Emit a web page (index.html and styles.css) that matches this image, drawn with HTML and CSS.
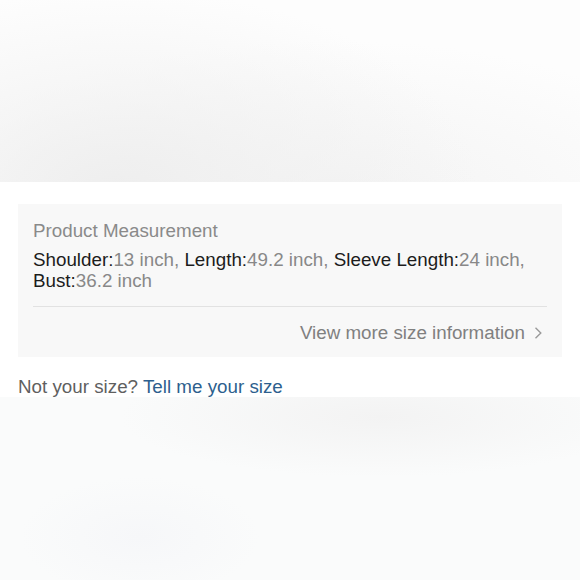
FILE: index.html
```html
<!DOCTYPE html>
<html>
<head>
<meta charset="utf-8">
<link rel="stylesheet" href="styles.css">
</head>
<body>
<div class="hero"></div>
<section class="size">
  <div class="card">
    <div class="title">Product Measurement</div>
    <p class="specs"><span class="k">Shoulder:</span><span class="v">13 inch, </span><span class="k">Length:</span><span class="v">49.2 inch, </span><span class="k">Sleeve Length:</span><span class="v">24 inch, </span><span class="k">Bust:</span><span class="v">36.2 inch</span></p>
    <div class="more">View more size information <svg class="chev" width="9" height="14" viewBox="0 0 9 14"><path d="M1.5 1.8 L6.8 7 L1.5 12.2" fill="none" stroke="#9a9a9a" stroke-width="1.4"/></svg></div>
  </div>
  <div class="notsize">Not your size? <a class="link">Tell me your size</a></div>
</section>
<div class="below"></div>
</body>
</html>
```
FILE: styles.css
```css
html, body { margin: 0; padding: 0; background: #fff; }
body { font-family: "Liberation Sans", Arial, sans-serif; width: 580px; }
.hero {
  height: 182px;
  background:
    radial-gradient(ellipse 360px 200px at 120px 190px, #eeeeee 0%, rgba(240,240,240,0.6) 45%, rgba(253,253,253,0) 100%),
    radial-gradient(ellipse 400px 160px at 330px 200px, #f3f3f3 0%, rgba(253,253,253,0) 100%),
    #fdfdfd;
}
.size { padding: 22px 18px 0; }
.card {
  background: #f8f8f8;
  padding: 16px 15px 0;
  box-sizing: border-box;
  height: 153px;
}
.title { font-size: 18.8px; color: #8a8a8a; line-height: 22px; }
.specs {
  margin: 7px 0 0;
  font-size: 18.8px;
  line-height: 21px;
  padding-bottom: 15px;
  border-bottom: 1px solid #e2e2e2;
}
.k { color: #1c1c1c; }
.v { color: #888; }
.more {
  display: flex; justify-content: flex-end; align-items: center; gap: 9px;
  font-size: 18.8px; line-height: 22px; color: #808080; padding-top: 15px; padding-right: 4px;
}
.chev { display: block; }
.notsize { font-size: 18.8px; color: #5f5f5f; margin-top: 18px; padding-top: 1px; line-height: 21px; height: 21px; }
.link { color: #2d5f8e; }
.below {
  height: 183px;
  background:
    radial-gradient(ellipse 260px 60px at 380px 20px, #f3f3f3 0%, rgba(247,248,249,0) 100%),
    radial-gradient(ellipse 120px 60px at 140px 140px, #f6f7f9 0%, rgba(250,250,251,0) 100%),
    #fafbfb;
}
```
